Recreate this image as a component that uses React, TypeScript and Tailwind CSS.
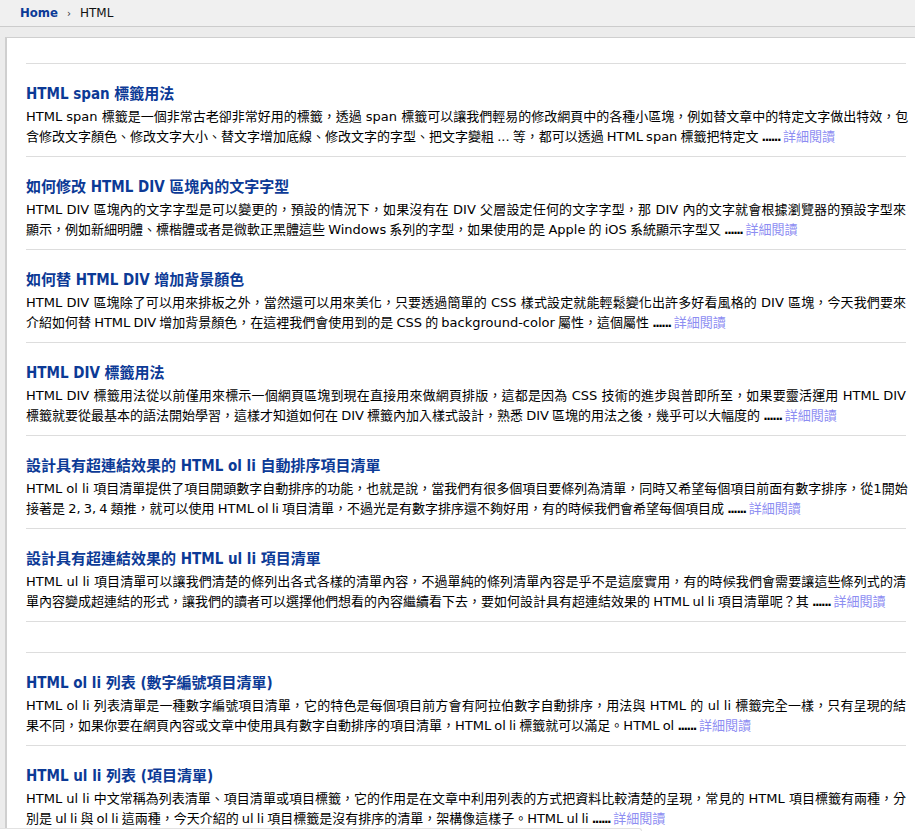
const posts = [
  {
    title: "HTML span 標籤用法",
    lines: [
      "HTML span 標籤是一個非常古老卻非常好用的標籤，透過 span 標籤可以讓我們輕易的修改網頁中的各種小區塊，例如替文章中的特定文字做出特效，包",
      "含修改文字顏色、修改文字大小、替文字增加底線、修改文字的字型、把文字變粗 ... 等，都可以透過 HTML span 標籤把特定文",
    ],
  },
  {
    title: "如何修改 HTML DIV 區塊內的文字字型",
    lines: [
      "HTML DIV 區塊內的文字字型是可以變更的，預設的情況下，如果沒有在 DIV 父層設定任何的文字字型，那 DIV 內的文字就會根據瀏覽器的預設字型來",
      "顯示，例如新細明體、標楷體或者是微軟正黑體這些 Windows 系列的字型，如果使用的是 Apple 的 iOS 系統顯示字型又",
    ],
  },
  {
    title: "如何替 HTML DIV 增加背景顏色",
    lines: [
      "HTML DIV 區塊除了可以用來排板之外，當然還可以用來美化，只要透過簡單的 CSS 樣式設定就能輕鬆變化出許多好看風格的 DIV 區塊，今天我們要來",
      "介紹如何替 HTML DIV 增加背景顏色，在這裡我們會使用到的是 CSS 的 background-color 屬性，這個屬性",
    ],
  },
  {
    title: "HTML DIV 標籤用法",
    lines: [
      "HTML DIV 標籤用法從以前僅用來標示一個網頁區塊到現在直接用來做網頁排版，這都是因為 CSS 技術的進步與普即所至，如果要靈活運用 HTML DIV",
      "標籤就要從最基本的語法開始學習，這樣才知道如何在 DIV 標籤內加入樣式設計，熟悉 DIV 區塊的用法之後，幾乎可以大幅度的",
    ],
  },
  {
    title: "設計具有超連結效果的 HTML ol li 自動排序項目清單",
    lines: [
      "HTML ol li 項目清單提供了項目開頭數字自動排序的功能，也就是說，當我們有很多個項目要條列為清單，同時又希望每個項目前面有數字排序，從1開始",
      "接著是 2, 3, 4 類推，就可以使用 HTML ol li 項目清單，不過光是有數字排序還不夠好用，有的時候我們會希望每個項目成",
    ],
  },
  {
    title: "設計具有超連結效果的 HTML ul li 項目清單",
    lines: [
      "HTML ul li 項目清單可以讓我們清楚的條列出各式各樣的清單內容，不過單純的條列清單內容是乎不是這麼實用，有的時候我們會需要讓這些條列式的清",
      "單內容變成超連結的形式，讓我們的讀者可以選擇他們想看的內容繼續看下去，要如何設計具有超連結效果的 HTML ul li 項目清單呢？其",
    ],
  },
];

const related = [
  {
    title: "HTML ol li 列表 (數字編號項目清單)",
    lines: [
      "HTML ol li 列表清單是一種數字編號項目清單，它的特色是每個項目前方會有阿拉伯數字自動排序，用法與 HTML 的 ul li 標籤完全一樣，只有呈現的結",
      "果不同，如果你要在網頁內容或文章中使用具有數字自動排序的項目清單，HTML ol li 標籤就可以滿足。HTML ol",
    ],
  },
  {
    title: "HTML ul li 列表 (項目清單)",
    lines: [
      "HTML ul li 中文常稱為列表清單、項目清單或項目標籤，它的作用是在文章中利用列表的方式把資料比較清楚的呈現，常見的 HTML 項目標籤有兩種，分",
      "別是 ul li 與 ol li 這兩種，今天介紹的 ul li 項目標籤是沒有排序的清單，架構像這樣子。HTML ul li",
    ],
  },
];

type Post = { title: string; lines: string[] };

function PostItem({ post }: { post: Post }) {
  return (
    <div className="border-b border-[#dddddd] pt-[20px] pb-[9px]">
      <a
        href="#"
        className="block font-['DejaVu_Sans_Condensed','DejaVu_Sans','Noto_Sans_CJK_TC',sans-serif] text-[15px] font-bold leading-[20px] text-[#0c3a96]"
      >
        {post.title}
      </a>
      <p className="mt-[3px] text-[13px] leading-[20px] text-black">
        <span className="block whitespace-nowrap text-justify [text-align-last:justify]">{post.lines[0]}</span>
        <span className="block whitespace-nowrap [word-spacing:-1px]">
          {post.lines[1]} <b className="text-[12px] font-bold tracking-[-1.5px]">......</b>{" "}
          <a href="#" className="text-[#8d8df2]">詳細閱讀</a>
        </span>
      </p>
    </div>
  );
}

export default function App() {
  return (
    <div className="relative h-[831px] overflow-hidden bg-[#ececec] font-['DejaVu_Sans','Noto_Sans_CJK_TC',sans-serif]">
      <div className="flex h-[27px] items-center border-b border-[#cccccc] bg-[#f0f0f0] pl-[20px] text-[12px]">
        <a href="#" className="font-['DejaVu_Sans_Condensed','DejaVu_Sans',sans-serif] text-[13px] font-bold text-[#0c3a96]">
          Home
        </a>
        <span className="mx-[9px] text-[10px] text-[#333]">›</span>
        <span className="text-[#111]">HTML</span>
      </div>
      <div className="ml-[5px] mt-[10px] h-full border-l-2 border-t border-[#cfcfcf] bg-white pl-[19px] pr-[9px] pt-[25px]">
        <div className="border-t border-[#dddddd]">
          {posts.map((p) => (
            <PostItem key={p.title} post={p} />
          ))}
        </div>
        <div className="mt-[30px] border-t border-[#dddddd]">
          {related.map((p) => (
            <PostItem key={p.title} post={p} />
          ))}
        </div>
      </div>
      <div className="absolute bottom-0 left-0 h-[3px] w-[642px] rounded-tr-[6px] border-r border-t border-[#e2e2e2] bg-white" />
    </div>
  );
}
